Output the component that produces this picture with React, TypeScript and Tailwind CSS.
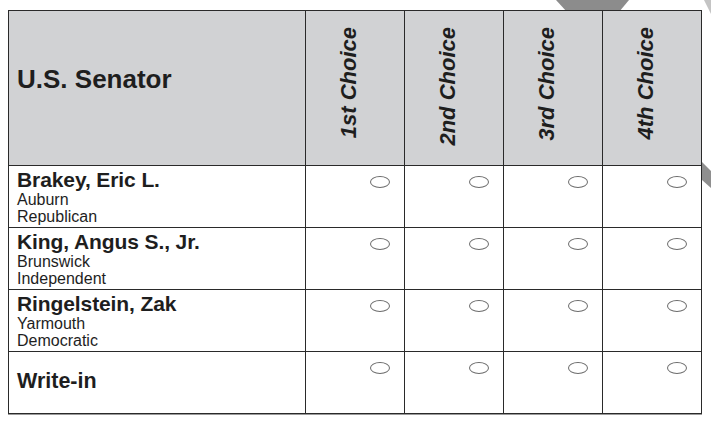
const choices = ["1st Choice", "2nd Choice", "3rd Choice", "4th Choice"] as const;

const candidates = [
  { name: "Brakey, Eric L.", town: "Auburn", party: "Republican" },
  { name: "King, Angus S., Jr.", town: "Brunswick", party: "Independent" },
  { name: "Ringelstein, Zak", town: "Yarmouth", party: "Democratic" },
] as const;

const line = "border-[#2a2a2a]";

function Oval() {
  return (
    <div className="flex justify-end pr-[14px] pt-[10px]">
      <span className="block h-[12px] w-[20px] rounded-[50%] border border-[#6b6b6b]" />
    </div>
  );
}

export default function App() {
  return (
    <div className="relative h-[423px] w-[711px] overflow-hidden bg-white font-['Liberation_Sans',Arial,sans-serif] text-[#1e1e1e]">
      {/* background marks behind the ballot */}
      <svg className="absolute left-0 top-0" width="711" height="423" aria-hidden>
        <polygon points="556,0 629,0 619,12 567,12" fill="#8c8c8c" />
        <polygon points="704,0 711,0 711,14" fill="#c4c4c4" />
        <polygon points="702,162 711,171 711,188 702,180" fill="#8f8f8f" />
      </svg>

      <div className={`relative ml-[8px] mt-[10px] w-[694px] border-[1.5px] ${line} shadow-[0_1px_0_#9a9a9a]`}>
        <div className="grid grid-cols-[297px_99px_99px_99px_1fr]">
          <div className={`flex h-[155px] items-center border-r border-b ${line} bg-[#d1d2d4] pl-[8px] pb-[18px]`}>
            <span className="text-[26px] font-bold">U.S. Senator</span>
          </div>
          {choices.map((c, i) => (
            <div
              key={c}
              className={`flex h-[155px] items-start justify-center border-b ${line} bg-[#d1d2d4] pt-[16px] ${i < 3 ? "border-r" : ""}`}
            >
              <span className="ml-[-12px] rotate-180 text-[22px] font-bold italic leading-none [writing-mode:vertical-rl]">
                {c}
              </span>
            </div>
          ))}

          {candidates.map((cand) => (
            <div key={cand.name} className="contents">
              <div className={`h-[62px] border-r border-b ${line} pl-[8px] pt-[3px]`}>
                <div className="text-[21px] font-bold leading-[22px] tracking-[-0.1px]">{cand.name}</div>
                <div className="text-[16px] leading-[17px]">{cand.town}</div>
                <div className="text-[16px] leading-[17px]">{cand.party}</div>
              </div>
              {choices.map((c, i) => (
                <div key={c} className={`border-b ${line} ${i < 3 ? "border-r" : ""}`}>
                  <Oval />
                </div>
              ))}
            </div>
          ))}

          <div className={`h-[61px] border-r ${line} pl-[8px] pt-[18px]`}>
            <div className="text-[21.5px] font-bold leading-[23px]">Write-in</div>
          </div>
          {choices.map((c, i) => (
            <div key={c} className={`${line} ${i < 3 ? "border-r" : ""}`}>
              <Oval />
            </div>
          ))}
        </div>
      </div>
    </div>
  );
}
